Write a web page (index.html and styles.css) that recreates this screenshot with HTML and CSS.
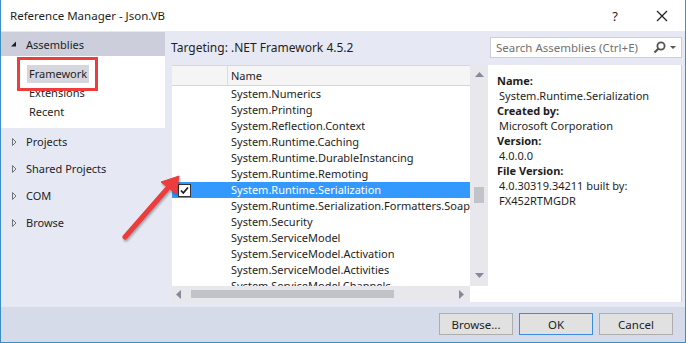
FILE: index.html
```html
<!DOCTYPE html>
<html>
<head>
	<meta charset="utf-8">
	<title>Reference Manager - Json.VB</title>
	<link rel="stylesheet" href="styles.css">
</head>
<body>
	<div class="window">
		<div class="titlebar">
			<span class="title">Reference Manager - Json.VB</span>
			<span class="help">?</span>
			<svg class="close" width="12" height="12" viewBox="0 0 12 12"><path d="M1 1L11 11M11 1L1 11" stroke="#1e1e1e" stroke-width="1.2"/></svg>
		</div>
		<div class="body">
			<div class="side">
				<div class="node head">
					<svg class="tri" width="8" height="8" viewBox="0 0 8 8"><path d="M6 1.5V6.5H1Z" fill="#1e1e1e"/></svg>
					<span>Assemblies</span>
				</div>
				<div class="subitems">
					<div class="sub"><span class="sel">Framework</span></div>
					<div class="sub"><span>Extensions</span></div>
					<div class="sub"><span>Recent</span></div>
				</div>
				<div class="node">
					<svg class="tri" width="8" height="8" viewBox="0 0 8 8"><path d="M2.5 0.5V7.5L6 4Z" fill="none" stroke="#717171"/></svg>
					<span>Projects</span>
				</div>
				<div class="node">
					<svg class="tri" width="8" height="8" viewBox="0 0 8 8"><path d="M2.5 0.5V7.5L6 4Z" fill="none" stroke="#717171"/></svg>
					<span>Shared Projects</span>
				</div>
				<div class="node">
					<svg class="tri" width="8" height="8" viewBox="0 0 8 8"><path d="M2.5 0.5V7.5L6 4Z" fill="none" stroke="#717171"/></svg>
					<span>COM</span>
				</div>
				<div class="node">
					<svg class="tri" width="8" height="8" viewBox="0 0 8 8"><path d="M2.5 0.5V7.5L6 4Z" fill="none" stroke="#717171"/></svg>
					<span>Browse</span>
				</div>
			</div>
			<div class="main">
				<div class="toolbar">
					<span class="target">Targeting: .NET Framework 4.5.2</span>
					<div class="search">
						<span class="placeholder">Search Assemblies (Ctrl+E)</span>
						<svg width="13" height="13" viewBox="0 0 13 13"><circle cx="8" cy="5" r="3.6" fill="none" stroke="#555" stroke-width="1.8"/><path d="M5.5 7.5L1.5 11.5" stroke="#555" stroke-width="2.2"/></svg>
						<svg width="6" height="4" viewBox="0 0 6 4"><path d="M0 0H6L3 3Z" fill="#555"/></svg>
					</div>
				</div>
				<div class="content">
					<div class="listbox">
						<div class="table">
							<div class="row header">
								<div class="c1"></div>
								<div class="c2">Name</div>
							</div>
							<div class="row"><div class="c1"></div><div class="c2">System.Numerics</div></div>
							<div class="row"><div class="c1"></div><div class="c2">System.Printing</div></div>
							<div class="row"><div class="c1"></div><div class="c2">System.Reflection.Context</div></div>
							<div class="row"><div class="c1"></div><div class="c2">System.Runtime.Caching</div></div>
							<div class="row"><div class="c1"></div><div class="c2">System.Runtime.DurableInstancing</div></div>
							<div class="row"><div class="c1"></div><div class="c2">System.Runtime.Remoting</div></div>
							<div class="row selected">
								<div class="c1">
									<span class="check"><svg width="11" height="11" viewBox="0 0 11 11"><path d="M2 5.5L4.3 8L9 2.5" fill="none" stroke="#1e1e1e" stroke-width="1.8"/></svg></span>
								</div>
								<div class="c2">System.Runtime.Serialization</div>
							</div>
							<div class="row"><div class="c1"></div><div class="c2">System.Runtime.Serialization.Formatters.Soap</div></div>
							<div class="row"><div class="c1"></div><div class="c2">System.Security</div></div>
							<div class="row"><div class="c1"></div><div class="c2">System.ServiceModel</div></div>
							<div class="row"><div class="c1"></div><div class="c2">System.ServiceModel.Activation</div></div>
							<div class="row"><div class="c1"></div><div class="c2">System.ServiceModel.Activities</div></div>
							<div class="row"><div class="c1"></div><div class="c2">System.ServiceModel.Channels</div></div>
						</div>
						<div class="vscroll">
							<svg width="9" height="5" viewBox="0 0 9 5"><path d="M0 5H9L4.5 0Z" fill="#868999"/></svg>
							<div class="vthumb"></div>
							<svg class="down" width="9" height="5" viewBox="0 0 9 5"><path d="M0 0H9L4.5 5Z" fill="#868999"/></svg>
						</div>
						<div class="hscroll">
							<svg width="5" height="9" viewBox="0 0 5 9"><path d="M5 0V9L0 4.5Z" fill="#868999"/></svg>
							<div class="hthumb"></div>
							<svg class="right" width="5" height="9" viewBox="0 0 5 9"><path d="M0 0V9L5 4.5Z" fill="#868999"/></svg>
						</div>
						<div class="corner"></div>
					</div>
					<div class="details">
						<div class="label">Name:</div>
						<div class="value">System.Runtime.Serialization</div>
						<div class="label">Created by:</div>
						<div class="value">Microsoft Corporation</div>
						<div class="label">Version:</div>
						<div class="value">4.0.0.0</div>
						<div class="label">File Version:</div>
						<div class="value">4.0.30319.34211 built by:<br>FX452RTMGDR</div>
					</div>
				</div>
			</div>
		</div>
		<div class="footer">
			<button>Browse...</button>
			<button class="default">OK</button>
			<button>Cancel</button>
		</div>
		<div class="callout-box"></div>
		<svg class="callout-arrow" width="686" height="343" viewBox="0 0 686 343">
			<g fill="#ec3c3c" stroke="#ec3c3c">
				<path d="M124 237L166 189" stroke-width="5" stroke-linecap="round"/>
				<path d="M178 176L175 194L160 182Z" stroke-width="1" stroke-linejoin="round"/>
			</g>
		</svg>
	</div>
</body>
</html>
```

FILE: styles.css
```css
body{margin: 0;font-family: 'Noto Sans', 'Liberation Sans', sans-serif;font-size: 11px;color: #1e1e1e;}
.window{position: relative;width: 686px;height: 343px;box-sizing: border-box;border: 1px solid #3d8ec6;border-top: none;display: flex;flex-direction: column;background-color: #e6e9f4;overflow: hidden;}
.titlebar{height: 31px;flex: none;background-color: #fff;display: flex;align-items: center;padding-left: 9px;}
.title{flex: 1;font-size: 11.5px;}
.help{font-size: 13px;margin-right: 38px;}
.close{margin-right: 17px;}
.body{flex: 1;display: flex;min-height: 0;}
.side{width: 164px;flex: none;padding-top: 1px;}
.node{height: 27px;display: flex;align-items: center;}
.node .tri{margin: 0 8px 0 9px;}
.head{height: 24px;background-color: #cccedb;}
.subitems{background-color: #fff;padding: 9px 0 6px 26px;}
.sub{height: 19px;display: flex;align-items: flex-start;}
.sub span{padding: 0 2px;line-height: 18px;}
.sub .sel{background-color: #d6d7de;}
.main{flex: 1;display: flex;flex-direction: column;padding: 0 3px 5px 7px;}
.toolbar{height: 34px;display: flex;align-items: flex-start;justify-content: space-between;}
.target{margin-top: 8px;margin-left: -1px;font-size: 12px;}
.search{width: 192px;height: 21px;box-sizing: border-box;margin-top: 6px;background-color: #fff;border: 1px solid #cccedb;display: flex;align-items: center;padding: 0 5px;gap: 4px;}
.placeholder{flex: 1;color: #717171;font-size: 11.5px;}
.content{flex: 1;display: flex;min-height: 0;}
.listbox{width: 316px;display: grid;grid-template-columns: 298px 18px;grid-template-rows: 221px 16px;background-color: #fff;}
.table{overflow: hidden;}
.row{display: flex;height: 16px;line-height: 16px;white-space: nowrap;}
.row .c1{width: 55px;flex: none;display: flex;align-items: center;}
.row .c2{padding-left: 4px;overflow: hidden;}
.row.header{height: 19px;line-height: 19px;background-color: #f5f5f5;border-top: 1px solid #d5d6e0;border-bottom: 1px solid #d5d6e0;}
.row.header .c1{border-right: 1px solid #dcdcdc;}
.row.header .c2{padding-left: 3px;}
.row.selected{background-color: #3399ff;color: #fff;}
.check{width: 13px;height: 13px;box-sizing: border-box;margin-left: 6px;background-color: #fff;border: 1px solid #333;display: flex;align-items: center;justify-content: center;}
.vscroll{background-color: #e8e8ec;display: flex;flex-direction: column;align-items: center;padding-top: 7px;}
.vthumb{width: 10px;height: 16px;background-color: #c2c3c9;margin-top: 110px;}
.vscroll .down{margin-top: auto;margin-bottom: 8px;}
.hscroll{background-color: #e8e8ec;display: flex;align-items: center;padding-left: 4px;}
.hthumb{width: 203px;height: 8px;background-color: #c2c3c9;margin-left: 10px;}
.hscroll .right{margin-left: auto;margin-right: 6px;}
.corner{background-color: #fff;}
.details{flex: 1;background-color: #fff;border-right: 1px solid #cfd1dc;padding: 8px 0 0 9px;line-height: 15px;}
.label{font-weight: bold;}
.value{padding-left: 2px;}
.footer{height: 35px;flex: none;background-color: #d6dbe9;display: flex;justify-content: flex-end;align-items: flex-start;gap: 6px;padding: 6px 12px 0 0;box-sizing: border-box;}
button{width: 74px;height: 22px;font-family: inherit;font-size: 11.5px;color: #1e1e1e;background-color: #e1e1e1;border: 1px solid #adadad;padding: 0;}
button.default{border-color: #3c8de0;}
.callout-box{position: absolute;left: 16px;top: 57px;width: 81px;height: 34px;box-sizing: border-box;border: 3px solid #ee3d3d;}
.callout-arrow{position: absolute;left: 0;top: 0;pointer-events: none;filter: drop-shadow(1px 2px 1px rgba(0,0,0,0.3));}
```
